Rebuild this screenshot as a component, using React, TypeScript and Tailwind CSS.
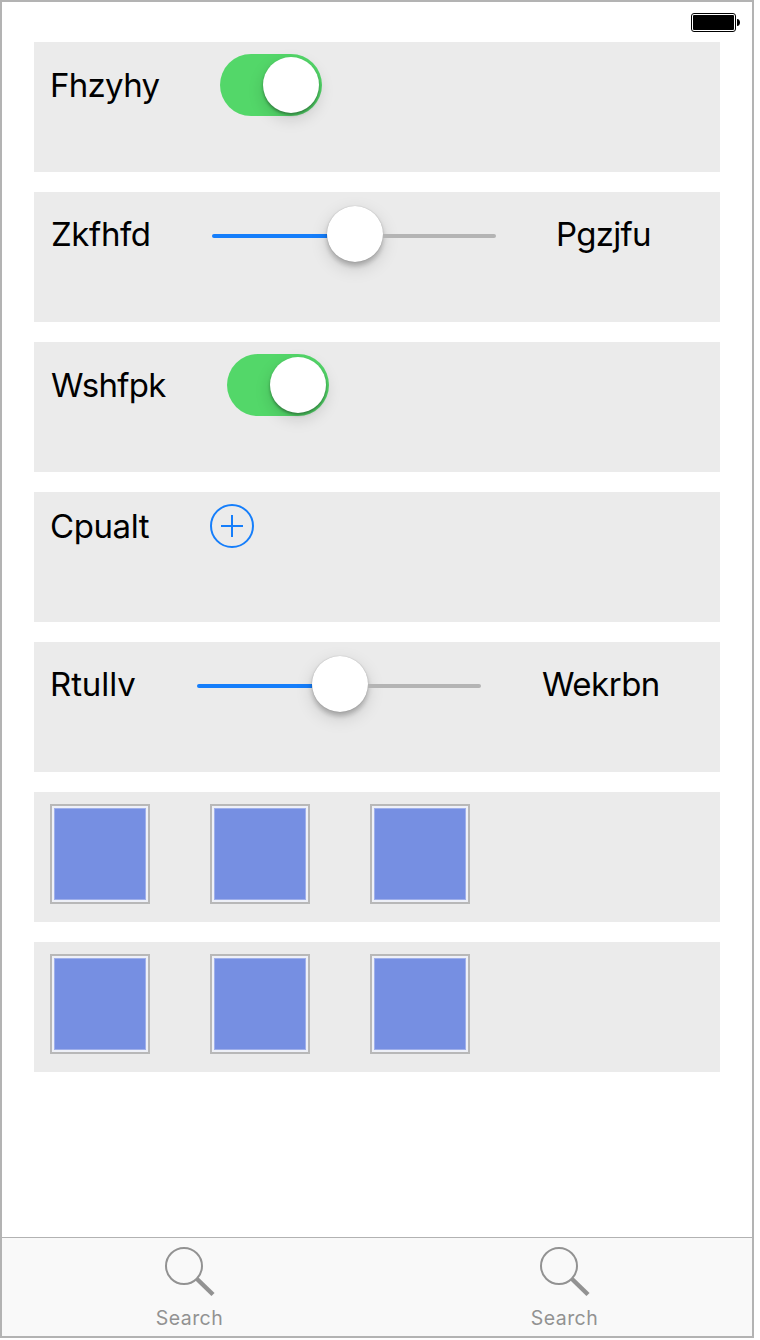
import type { ReactNode } from "react";

function Card({ children }: { children: ReactNode }) {
  return (
    <section className="flex h-[130px] items-start bg-[#ebebeb] pt-3 pl-4">
      {children}
    </section>
  );
}

function Label({ text, className }: { text: string; className: string }) {
  return (
    <span
      className={`flex shrink-0 items-center whitespace-nowrap pt-px text-[33px] leading-none text-black ${className}`}
    >
      {text}
    </span>
  );
}

function Toggle() {
  return (
    <div className="flex h-[62px] w-[102px] shrink-0 items-center justify-end rounded-full bg-[#53d769] pr-[3px]">
      <div className="size-14 rounded-full bg-white shadow-[0_6px_16px_rgba(0,0,0,0.15),0_2px_3px_rgba(0,0,0,0.35)]" />
    </div>
  );
}

function Slider() {
  return (
    <div className="flex h-[60px] w-[284px] shrink-0 items-center">
      <div className="mt-1 h-1 w-[115px] rounded-l-full bg-[#157efb]" />
      <div className="size-14 shrink-0 rounded-full bg-white shadow-[0_6px_18px_rgba(0,0,0,0.14),0_4px_5px_rgba(0,0,0,0.22),0_0_1px_rgba(0,0,0,0.3)]" />
      <div className="mt-1 h-1 grow rounded-r-full bg-[#b4b4b4]" />
    </div>
  );
}

function AddButton() {
  return (
    <svg viewBox="0 0 44 44" className="size-11 shrink-0" fill="none" stroke="#157efb" strokeWidth="2">
      <circle cx="22" cy="22" r="21" />
      <path d="M11 22H33M22 11V33" />
    </svg>
  );
}

function Swatches() {
  return (
    <Card>
      <div className="flex gap-[60px]">
        {[0, 1, 2].map((n) => (
          <div key={n} className="size-[100px] border-2 border-[#b8b8b8] bg-[#eef0f7] p-0.5">
            <div className="size-full border border-[#9fafea] bg-[#768fe2]" />
          </div>
        ))}
      </div>
    </Card>
  );
}

function Tab() {
  return (
    <div className="flex flex-1 flex-col items-center pt-2">
      <svg viewBox="0 0 52 52" className="size-[52px]" fill="none" stroke="#929292">
        <circle cx="20" cy="20" r="18" strokeWidth="2" />
        <path d="M33 33L49 48.5" strokeWidth="4.5" />
      </svg>
      <span className="mt-2 text-[19.5px] leading-[24px] tracking-[0.45px] text-[#929292]">Search</span>
    </div>
  );
}

function Battery() {
  return (
    <svg viewBox="0 0 50 20" className="h-5 w-[50px]">
      <rect x="0.5" y="0.5" width="44" height="18" rx="2.5" fill="white" stroke="black" />
      <rect x="2" y="2" width="41" height="15" rx="1" fill="black" />
      <path d="M46 6C50 6 50 13 46 13Z" fill="black" />
    </svg>
  );
}

export default function App() {
  return (
    <div className="h-[1340px] w-[760px] bg-white font-['Inter',sans-serif]">
      <div className="flex h-[1338px] w-[754px] flex-col border-2 border-[#b3b3b3] bg-white">
        <header className="flex h-10 shrink-0 justify-end pt-[11px] pr-[11px]">
          <Battery />
        </header>
        <main className="flex grow flex-col gap-5 pr-8 pl-8">
          <Card>
            <Label text="Fhzyhy" className="h-[62px] w-[170px] tracking-[-0.7px]" />
            <Toggle />
          </Card>
          <Card>
            <Label text="Zkfhfd" className="h-[60px] w-[162px] pl-px tracking-[-0.4px]" />
            <Slider />
            <Label text="Pgzjfu" className="ml-[60px] h-[60px] tracking-[-0.7px]" />
          </Card>
          <Card>
            <Label text="Wshfpk" className="h-[62px] w-[177px] pl-px tracking-[-0.7px]" />
            <Toggle />
          </Card>
          <Card>
            <Label text="Cpualt" className="h-[44px] w-[160px] tracking-[-0.4px]" />
            <AddButton />
          </Card>
          <Card>
            <Label text="Rtullv" className="h-[60px] w-[147px] tracking-[-0.1px]" />
            <Slider />
            <Label text="Wekrbn" className="ml-[60px] h-[60px] pl-px tracking-[-0.5px]" />
          </Card>
          <Swatches />
          <Swatches />
        </main>
        <footer className="flex h-[99px] shrink-0 border-t border-[#b2b2b2] bg-[#f9f9f9]">
          <Tab />
          <Tab />
        </footer>
      </div>
    </div>
  );
}
